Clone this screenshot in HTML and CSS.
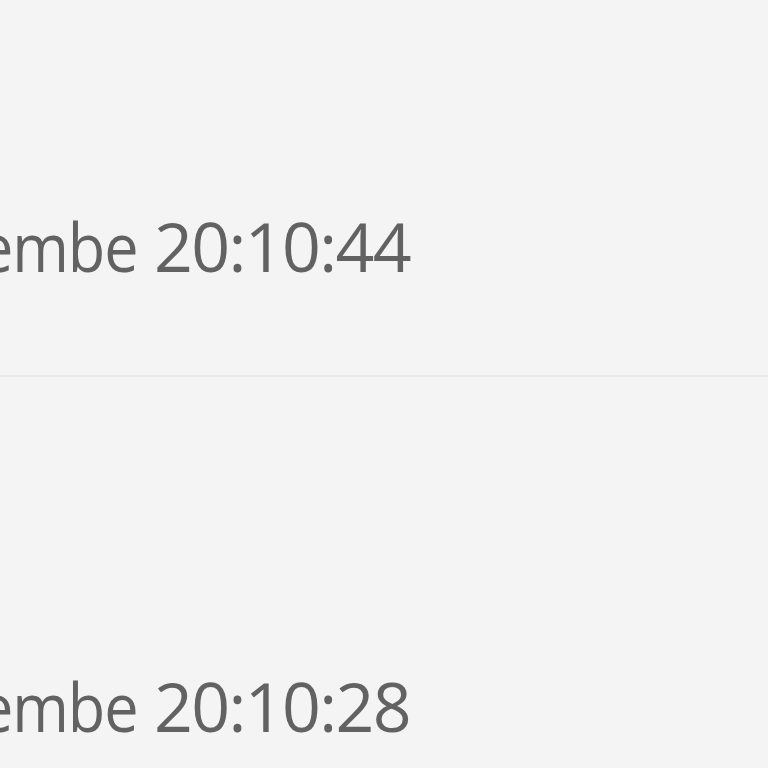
FILE: index.html
```html
<!DOCTYPE html>
<html>
<head>
<meta charset="utf-8">
<link rel="stylesheet" href="styles.css">
</head>
<body>
<div class="list">
  <div class="row row-first"><span class="stamp"><span class="month">Desembe</span> <span class="time">20:10:44</span></span></div>
  <div class="row row-second"><span class="stamp"><span class="month">Desembe</span> <span class="time">20:10:28</span></span></div>
</div>
</body>
</html>
```

FILE: styles.css
```css
html, body {
  margin: 0;
  padding: 0;
  background: #f4f4f4;
  width: 768px;
  height: 768px;
  overflow: hidden;
}
.list {
  display: flex;
  flex-direction: column;
}
.row {
  font-family: "Open Sans", "Noto Sans", sans-serif;
  font-size: 68px;
  letter-spacing: -1.2px;
  line-height: normal;
  color: #626262;
  white-space: nowrap;
}
.stamp {
  display: block;
  margin-left: -155px;
}
.month {
  display: inline-block;
  transform: scaleX(0.9);
  transform-origin: right center;
}
.time {
  letter-spacing: -1.6px;
}
.row-first {
  padding-top: 199px;
  padding-bottom: 83px;
  border-bottom: 2px solid #e8e8e8;
}
.row-second {
  padding-top: 282px;
}
```
